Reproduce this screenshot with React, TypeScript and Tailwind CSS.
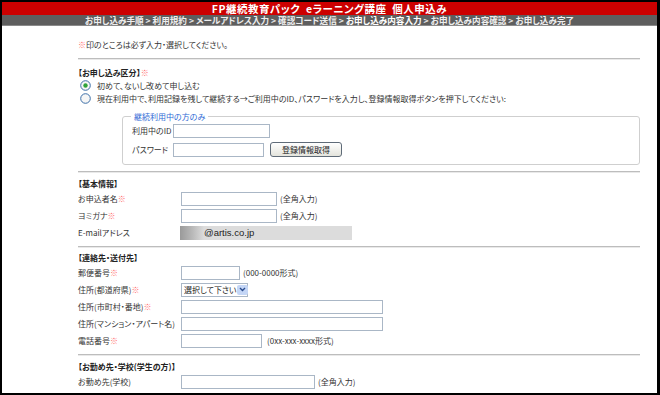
import React from "react";

const Req = () => <span className="text-[#ff6a6a]">※</span>;

const Box = ({ className }: { className: string }) => (
  <div className={`h-[14px] border border-[#aab7c6] bg-white shrink-0 ${className}`} />
);

const Hr = ({ className = "" }: { className?: string }) => (
  <div className={`h-[2px] border-t border-[#bdbdbd] bg-[#e9e9e9] mr-[17px] ${className}`} />
);

const Row = ({ children, label }: { children?: React.ReactNode; label: React.ReactNode }) => (
  <div className="flex h-[17px] items-center">
    <div className="w-[103px] shrink-0 whitespace-nowrap">{label}</div>
    {children}
  </div>
);

const Title = ({ children, className = "" }: { children: React.ReactNode; className?: string }) => (
  <div className={`h-[13px] flex items-center font-bold text-[#222] ${className}`}>{children}</div>
);

const Note = ({ children, className = "" }: { children: React.ReactNode; className?: string }) => (
  <span className={`ml-[3px] whitespace-nowrap ${className}`}>{children}</span>
);

const Radio = ({ on }: { on?: boolean }) => (
  <svg width="11" height="11" viewBox="0 0 11 11" className="shrink-0">
    <circle cx="5.5" cy="5.5" r="4.8" fill="#f6f6f6" stroke="#3d6fa8" strokeWidth="1" />
    {on && <circle cx="5.5" cy="5.5" r="2.2" fill="#2fa33a" />}
  </svg>
);

export default function App() {
  return (
    <div className="w-[660px] h-[395px] bg-black pt-[2px] pl-[2px] pr-[3px] pb-[2px] font-['Noto_Sans_CJK_JP',sans-serif] [font-feature-settings:'palt'] overflow-hidden">
      <div className="w-full h-full bg-white flex flex-col text-[8px] leading-none text-[#333]">
        <div className="h-[13px] bg-[#cc0000] flex items-center justify-center text-white text-[10.5px] leading-[13px] font-bold tracking-[0.5px] shrink-0 whitespace-nowrap">
          FP継続教育パック&nbsp;&nbsp;eラーニング講座&nbsp;&nbsp;個人申込み
        </div>
        <div className="h-[11px] bg-[#5e5e5e] border-b border-[#8a8a8a] flex items-center justify-center text-[#eeeeee] text-[8.6px] leading-[10px] font-bold shrink-0 whitespace-nowrap">
          <span>お申し込み手順 &gt; 利用規約 &gt; メールアドレス入力 &gt; 確認コード送信 &gt; </span>
          <span className="text-white">&nbsp;お申し込み内容入力</span>
          <span>&nbsp;&gt; お申し込み内容確認 &gt; お申し込み完了</span>
        </div>

        <div className="flex flex-col pl-[76px]">
          <div className="mt-[13px] h-[12px] flex items-center">
            <Req />
            印のところは必ず入力・選択してください。
          </div>
          <Hr className="mt-[7px]" />

          <Title className="mt-[6px]">
            【お申し込み区分】<Req />
          </Title>
          <div className="h-[13px] flex items-center gap-[6px] pl-[2px]">
            <Radio on />
            <span>初めて、ないし改めて申し込む</span>
          </div>
          <div className="h-[13px] flex items-center gap-[6px] pl-[2px] whitespace-nowrap">
            <Radio />
            <span>現在利用中で、利用記録を残して継続する→ご利用中のID、パスワードを入力し、登録情報取得ボタンを押下してください:</span>
          </div>

          <div className="relative mt-[11px] ml-[44px] mr-[17px] h-[49px] border border-[#cfcfcf] rounded-[3px]">
            <div className="absolute left-[8px] top-[-5px] bg-white px-[3px] text-[#2f6bd6] leading-[10px]">
              継続利用中の方のみ
            </div>
            <div className="flex items-center mt-[7px] ml-[9px] h-[14px]">
              <span className="w-[41px] whitespace-nowrap">利用中のID</span>
              <Box className="w-[97px]" />
            </div>
            <div className="flex items-center mt-[4px] ml-[9px] h-[15px]">
              <span className="w-[41px] whitespace-nowrap">パスワード</span>
              <Box className="w-[91px]" />
              <div className="ml-[6px] w-[72px] h-[15px] border border-[#5f6b78] rounded-[3px] bg-gradient-to-b from-white to-[#e4e4dc] flex items-center justify-center text-[#222]">
                登録情報取得
              </div>
            </div>
          </div>

          <Hr className="mt-[6px]" />
          <Title className="mt-[4px]">【基本情報】</Title>
          <Row label={<>お申込者名<Req /></>}>
            <Box className="w-[96px]" />
            <Note>(全角入力)</Note>
          </Row>
          <Row label={<>ヨミガナ<Req /></>}>
            <Box className="w-[96px]" />
            <Note>(全角入力)</Note>
          </Row>
          <Row label="E-mailアドレス">
            <div className="w-[172px] h-[14px] bg-[#dcdcdc] flex items-center ml-[-1px]">
              <div className="w-[24px] h-full bg-gradient-to-r from-[#9a9a9a] via-[#b8b8b8] to-[#dcdcdc]" />
              <span className="text-[#222] text-[9.5px] font-['Liberation_Sans',sans-serif]">@artis.co.jp</span>
            </div>
          </Row>

          <Hr className="mt-[5px]" />
          <Title className="mt-[3px]">【連絡先・送付先】</Title>
          <Row label={<>郵便番号<Req /></>}>
            <Box className="w-[59px]" />
            <Note>(000-0000形式)</Note>
          </Row>
          <Row label={<>住所(都道府県)<Req /></>}>
            <div className="w-[67px] h-[14px] border border-[#aab7c6] bg-white flex items-center justify-between pl-[2px] pr-[1px] whitespace-nowrap">
              <span className="text-[#222]">選択して下さい</span>
              <div className="w-[11px] h-[10px] shrink-0 rounded-[2px] bg-[#c4d6f6] flex items-center justify-center">
                <svg width="7" height="5" viewBox="0 0 7 5">
                  <path d="M1 1 L3.5 3.5 L6 1" fill="none" stroke="#2a4d8f" strokeWidth="1.4" />
                </svg>
              </div>
            </div>
          </Row>
          <Row label={<>住所(市町村・番地)<Req /></>}>
            <Box className="w-[202px]" />
          </Row>
          <Row label="住所(マンション・アパート名)">
            <Box className="w-[202px]" />
          </Row>
          <Row label={<>電話番号<Req /></>}>
            <Box className="w-[81px]" />
            <Note className="ml-[5px]">(0xx-xxx-xxxx形式)</Note>
          </Row>

          <Hr className="mt-[5px]" />
          <Title className="mt-[4px]">【お勤め先・学校(学生の方)】</Title>
          <Row label="お勤め先(学校)">
            <Box className="w-[134px]" />
            <Note>(全角入力)</Note>
          </Row>
        </div>
      </div>
    </div>
  );
}
